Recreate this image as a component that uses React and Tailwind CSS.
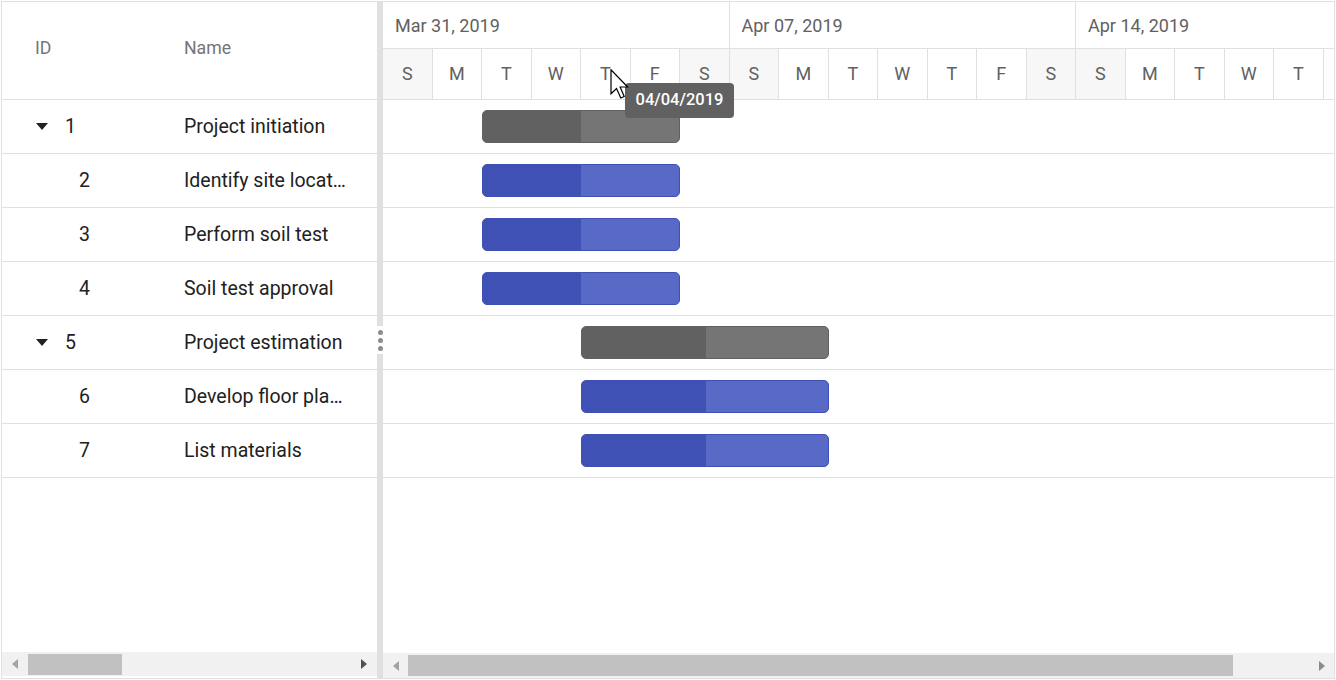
import React from "react";

const DAY = 49.5;

const rows = [
  { id: 1, name: "Project initiation", parent: true, start: 2, days: 4, progress: 0.5 },
  { id: 2, name: "Identify site location", start: 2, days: 4, progress: 0.5 },
  { id: 3, name: "Perform soil test", start: 2, days: 4, progress: 0.5 },
  { id: 4, name: "Soil test approval", start: 2, days: 4, progress: 0.5 },
  { id: 5, name: "Project estimation", parent: true, start: 4, days: 5, progress: 0.505 },
  { id: 6, name: "Develop floor plan for estimation", start: 4, days: 5, progress: 0.505 },
  { id: 7, name: "List materials", start: 4, days: 5, progress: 0.505 },
];

const weeks = ["Mar 31, 2019", "Apr 07, 2019", "Apr 14, 2019"];
const letters = ["S", "M", "T", "W", "T", "F", "S"];
const days = Array.from({ length: 20 }, (_, i) => ({
  letter: letters[i % 7],
  weekend: i % 7 === 0 || i % 7 === 6,
}));

function Caret({ dir, color }) {
  return dir === "left" ? (
    <svg width="6" height="10" viewBox="0 0 6 10">
      <path d="M6 0 L0 5 L6 10 Z" fill={color} />
    </svg>
  ) : (
    <svg width="6" height="10" viewBox="0 0 6 10">
      <path d="M0 0 L6 5 L0 10 Z" fill={color} />
    </svg>
  );
}

function Bar({ row }) {
  const left = row.start * DAY;
  const width = row.days * DAY;
  const parent = row.parent;
  return (
    <div
      className={`absolute top-[10px] h-[33px] rounded-[5px] border overflow-hidden ${
        parent ? "border-[#616161] bg-[#757575]" : "border-[#3f51b5] bg-[#5869c6]"
      }`}
      style={{ left, width }}
    >
      <div
        className={`h-full ${parent ? "bg-[#616161]" : "bg-[#3f51b5]"}`}
        style={{ width: `${row.progress * 100}%` }}
      />
    </div>
  );
}

export default function App() {
  return (
    <div className="w-[1336px] h-[680px] bg-white pt-[1px] pl-[1px] font-['Roboto',sans-serif]">
      <div className="w-[1334px] h-[678px] border border-[#e0e0e0] flex overflow-hidden">
        {/* grid pane */}
        <div className="w-[375px] h-full flex flex-col">
          <div className="h-[98px] border-b border-[#e0e0e0] flex items-center text-[17.7px] text-[#757575] shrink-0">
            <div className="w-[150px] pl-[33px] pb-[4px]">ID</div>
            <div className="pl-[32px] pb-[4px]">Name</div>
          </div>
          {rows.map((r) => (
            <div
              key={r.id}
              className="h-[54px] border-b border-[#e0e0e0] flex items-center text-[19.5px] text-[#212121] shrink-0"
            >
              <div className="w-[150px] flex items-center">
                {r.parent ? (
                  <>
                    <span className="ml-[34px] w-0 h-0 border-l-[6px] border-r-[6px] border-t-[7px] border-l-transparent border-r-transparent border-t-[#212121]" />
                    <span className="ml-[17px]">{r.id}</span>
                  </>
                ) : (
                  <span className="ml-[77px]">{r.id}</span>
                )}
              </div>
              <div className="w-[225px] pl-[32px] pr-[28px] truncate">{r.name}</div>
            </div>
          ))}
          <div className="flex-1" />
          <div className="h-[24px] mb-[2px] bg-[#f1f1f1] flex items-center">
            <div className="w-[26px] flex justify-center">
              <Caret dir="left" color="#a3a3a3" />
            </div>
            <div className="w-[94px] h-[21px] bg-[#c1c1c1]" />
            <div className="flex-1" />
            <div className="w-[26px] flex justify-center">
              <Caret dir="right" color="#505050" />
            </div>
          </div>
        </div>

        {/* splitter */}
        <div className="w-[6px] h-full flex flex-col">
          <div className="h-[324px] bg-[#e0e0e0]" />
          <div className="h-[28px] flex flex-col items-center justify-center gap-[3px] pl-[1px]">
            <span className="w-[5px] h-[5px] rounded-full bg-[#8d8d8d]" />
            <span className="w-[5px] h-[5px] rounded-full bg-[#8d8d8d]" />
            <span className="w-[5px] h-[5px] rounded-full bg-[#8d8d8d]" />
          </div>
          <div className="flex-1 bg-[#e0e0e0]" />
        </div>

        {/* chart pane */}
        <div className="flex-1 h-full flex flex-col overflow-hidden relative">
          <div className="h-[47px] border-b border-[#e0e0e0] flex shrink-0">
            {weeks.map((w) => (
              <div
                key={w}
                className="shrink-0 border-r border-[#e0e0e0] pl-[12px] pt-[10px] text-[18px] text-[#616161]"
                style={{ width: DAY * 7 }}
              >
                {w}
              </div>
            ))}
          </div>
          <div className="h-[51px] border-b border-[#e0e0e0] flex shrink-0">
            {days.map((d, i) => (
              <div
                key={i}
                className={`shrink-0 border-r border-[#e0e0e0] flex items-center justify-center text-[18px] text-[#616161] pb-[1px] ${
                  d.weekend ? "bg-[#f7f7f7]" : "bg-white"
                }`}
                style={{ width: DAY }}
              >
                {d.letter}
              </div>
            ))}
          </div>
          {rows.map((r) => (
            <div key={r.id} className="h-[54px] border-b border-[#e0e0e0] relative shrink-0">
              <Bar row={r} />
            </div>
          ))}
          <div className="flex-1" />
          <div className="h-[25px] bg-[#f1f1f1] flex items-center">
            <div className="w-[25px] flex justify-center">
              <Caret dir="left" color="#a3a3a3" />
            </div>
            <div className="w-[825px] h-[21px] bg-[#c1c1c1]" />
            <div className="flex-1" />
            <div className="w-[24px] flex justify-center">
              <Caret dir="right" color="#8a8a8a" />
            </div>
          </div>

          {/* date tooltip */}
          <div className="absolute left-[242px] top-[81px] w-[109px] h-[35px] rounded-[4px] bg-[#616161] text-white text-[16.5px] font-medium flex items-center justify-center">
            04/04/2019
          </div>
          {/* pointer */}
          <svg
            className="absolute left-[227px] top-[67px]"
            width="20"
            height="30"
            viewBox="0 0 13 20"
          >
            <path
              d="M0.5 0.5 L0.5 16.5 L4.2 13 L7 19.3 L9.3 18.3 L6.6 12 L11.6 12 Z"
              fill="white"
              stroke="black"
              strokeWidth="0.8"
              strokeLinejoin="miter"
            />
          </svg>
        </div>
      </div>
    </div>
  );
}
